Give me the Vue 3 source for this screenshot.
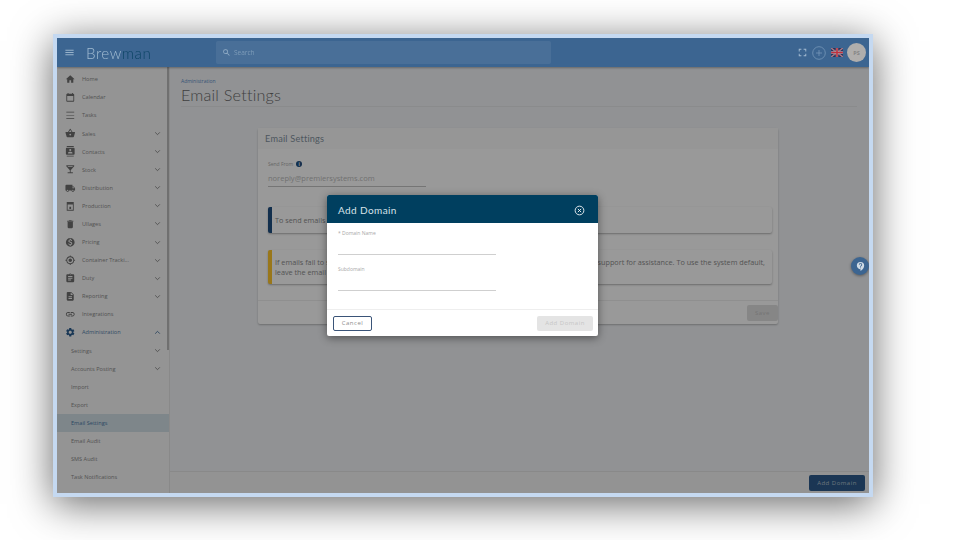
<script setup>
const P = {
  home: 'M10 20v-6h4v6h5v-8h3L12 3 2 12h3v8z',
  cal: 'M19 4h-1V2h-2v2H8V2H6v2H5a2 2 0 0 0-2 2v14a2 2 0 0 0 2 2h14a2 2 0 0 0 2-2V6a2 2 0 0 0-2-2zm0 16H5V9h14z',
  list: 'M3 4h18v1.6H3zM3 11.2h18v1.6H3zM3 18.4h18V20H3z',
  basket: 'M17.21 9l-4.38-6.56a1 1 0 0 0-1.66 0L6.79 9H2c-.55 0-1 .45-1 1l.04.27 2.54 9.27c.23.84 1 1.46 1.92 1.46h13c.92 0 1.69-.62 1.93-1.46l2.54-9.27L23 10c0-.55-.45-1-1-1h-4.79zM9 9l3-4.4L15 9H9zm3 8a2 2 0 1 1 0-4 2 2 0 0 1 0 4z',
  contacts: 'M20 0H4v2h16V0zM4 24h16v-2H4v2zM20 4H4c-1.1 0-2 .9-2 2v12c0 1.1.9 2 2 2h16c1.1 0 2-.9 2-2V6c0-1.1-.9-2-2-2zm-8 2.75c1.24 0 2.25 1.01 2.25 2.25s-1.01 2.25-2.25 2.25S9.75 10.24 9.75 9 10.76 6.75 12 6.75zM17 17H7v-1.5c0-1.67 3.33-2.5 5-2.5s5 .83 5 2.5V17z',
  bar: 'M21 5V3H3v2l8 9v5H6v2h12v-2h-5v-5l8-9zM7.43 7L5.66 5h12.69l-1.78 2H7.43z',
  truck: 'M20 8h-3V4H3c-1.1 0-2 .9-2 2v11h2c0 1.66 1.34 3 3 3s3-1.34 3-3h6c0 1.66 1.34 3 3 3s3-1.34 3-3h2v-5l-3-4zM6 18.5c-.83 0-1.5-.67-1.5-1.5s.67-1.5 1.5-1.5 1.5.67 1.5 1.5-.67 1.5-1.5 1.5zm13.5-9l1.96 2.5H17V9.5h2.5zm-1.5 9c-.83 0-1.5-.67-1.5-1.5s.67-1.5 1.5-1.5 1.5.67 1.5 1.5-.67 1.5-1.5 1.5z',
  prod: 'M4 2h16v20H4zM6 8v12h12V8zM10 13h4v5h-4z',
  ull: 'M6 19c0 1.1.9 2 2 2h8c1.1 0 2-.9 2-2V7H6v12zM19 4h-3.5l-1-1h-5l-1 1H5v2h14V4z',
  price: 'M12 2a10 10 0 1 0 0 20 10 10 0 0 0 0-20zm1.4 16.1V20h-2.7v-1.9c-1.7-.4-3.2-1.5-3.3-3.4h2c.1 1 .8 1.8 2.6 1.8 1.9 0 2.3-.9 2.3-1.5 0-.8-.4-1.5-2.6-2-2.4-.6-4.1-1.6-4.1-3.6 0-1.7 1.4-2.8 3.1-3.2V4h2.7v1.9c1.9.5 2.8 1.9 2.9 3.4h-2c-.1-1.1-.7-1.8-2.2-1.8-1.4 0-2.3.7-2.3 1.6 0 .8.6 1.3 2.6 1.8s4.1 1.4 4.1 3.8c0 1.8-1.3 2.8-3.1 3.4z',
  gps: 'M12 8c-2.21 0-4 1.79-4 4s1.79 4 4 4 4-1.79 4-4-1.79-4-4-4zm8.94 3A8.994 8.994 0 0 0 13 3.06V1h-2v2.06A8.994 8.994 0 0 0 3.06 11H1v2h2.06A8.994 8.994 0 0 0 11 20.94V23h2v-2.06A8.994 8.994 0 0 0 20.94 13H23v-2h-2.06zM12 19c-3.87 0-7-3.13-7-7s3.13-7 7-7 7 3.13 7 7-3.13 7-7 7z',
  duty: 'M19 3h-4.18C14.4 1.84 13.3 1 12 1c-1.3 0-2.4.84-2.82 2H5c-1.1 0-2 .9-2 2v14c0 1.1.9 2 2 2h14c1.1 0 2-.9 2-2V5c0-1.1-.9-2-2-2zm-7 0c.55 0 1 .45 1 1s-.45 1-1 1-1-.45-1-1 .45-1 1-1zm2 14H7v-2h7v2zm3-4H7v-2h10v2zm0-4H7V7h10v2z',
  report: 'M14 2H6c-1.1 0-1.99.9-1.99 2L4 20c0 1.1.89 2 1.99 2H18c1.1 0 2-.9 2-2V8l-6-6zm2 16H8v-2h8v2zm0-4H8v-2h8v2zm-3-5V3.5L18.5 9H13z',
  link: 'M3.9 12c0-1.71 1.39-3.1 3.1-3.1h4V7H7c-2.76 0-5 2.24-5 5s2.24 5 5 5h4v-1.9H7c-1.71 0-3.1-1.39-3.1-3.1zM8 13h8v-2H8v2zm9-6h-4v1.9h4c1.71 0 3.1 1.39 3.1 3.1s-1.39 3.1-3.1 3.1h-4V17h4c2.76 0 5-2.24 5-5s-2.24-5-5-5z',
  gear: 'M19.14 12.94c.04-.3.06-.61.06-.94 0-.32-.02-.64-.07-.94l2.03-1.58a.49.49 0 0 0 .12-.61l-1.92-3.32a.488.488 0 0 0-.59-.22l-2.39.96c-.5-.38-1.03-.7-1.62-.94l-.36-2.54a.484.484 0 0 0-.48-.41h-3.84c-.24 0-.43.17-.47.41l-.36 2.54c-.59.24-1.13.57-1.62.94l-2.39-.96c-.22-.08-.47 0-.59.22L2.74 8.87c-.12.21-.08.47.12.61l2.03 1.58c-.05.3-.09.63-.09.94s.02.64.07.94l-2.03 1.58a.49.49 0 0 0-.12.61l1.92 3.32c.12.22.37.29.59.22l2.39-.96c.5.38 1.03.7 1.62.94l.36 2.54c.05.24.24.41.48.41h3.84c.24 0 .44-.17.47-.41l.36-2.54c.59-.24 1.13-.56 1.62-.94l2.39.96c.22.08.47 0 .59-.22l1.92-3.32c.12-.22.07-.47-.12-.61l-2.01-1.58zM12 15.6c-1.98 0-3.6-1.62-3.6-3.6s1.62-3.6 3.6-3.6 3.6 1.62 3.6 3.6-1.62 3.6-3.6 3.6z',
}
const menu = [
  { label: 'Home', icon: 'home' },
  { label: 'Calendar', icon: 'cal' },
  { label: 'Tasks', icon: 'list' },
  { label: 'Sales', icon: 'basket', chev: 'down' },
  { label: 'Contacts', icon: 'contacts', chev: 'down' },
  { label: 'Stock', icon: 'bar', chev: 'down' },
  { label: 'Distribution', icon: 'truck', chev: 'down' },
  { label: 'Production', icon: 'prod', chev: 'down' },
  { label: 'Ullages', icon: 'ull', chev: 'down' },
  { label: 'Pricing', icon: 'price', chev: 'down' },
  { label: 'Container Tracki...', icon: 'gps', chev: 'down' },
  { label: 'Duty', icon: 'duty', chev: 'down' },
  { label: 'Reporting', icon: 'report', chev: 'down' },
  { label: 'Integrations', icon: 'link' },
  { label: 'Administration', icon: 'gear', chev: 'up', open: true },
  { label: 'Settings', sub: true, chev: 'down' },
  { label: 'Accounts Posting', sub: true, chev: 'down' },
  { label: 'Import', sub: true },
  { label: 'Export', sub: true },
  { label: 'Email Settings', sub: true, active: true },
  { label: 'Email Audit', sub: true },
  { label: 'SMS Audit', sub: true },
  { label: 'Task Notifications', sub: true },
  { label: 'Document Templates', sub: true },
]
</script>

<template>
  <div class="page">
    <div class="frame">
      <header class="topbar">
        <svg class="burger" viewBox="0 0 24 24"><path d="M3 18h18v-2H3zM3 13h18v-2H3zM3 6v2h18V6z" /></svg>
        <div class="logo">Brew<span>man</span></div>
        <div class="search">
          <svg viewBox="0 0 24 24"><path d="M15.5 14h-.79l-.28-.27A6.47 6.47 0 0 0 16 9.5 6.5 6.5 0 1 0 9.5 16c1.61 0 3.09-.59 4.23-1.57l.27.28v.79l5 4.99L20.49 19l-4.99-5zm-6 0C7.01 14 5 11.99 5 9.5S7.01 5 9.5 5 14 7.01 14 9.5 11.99 14 9.5 14z" /></svg>
          <span>Search</span>
        </div>
        <div class="tools">
          <svg class="full" viewBox="0 0 24 24"><path d="M2 9V2h7v2.500H4.500V9zM15 2h7v7h-2.500V4.500H15zM2 15h2.500v4.500H9V22H2zM19.500 15H22v7h-7v-2.500h4.500z" /></svg>
          <svg class="plus" viewBox="0 0 14 14"><circle cx="7" cy="7" r="6.3" /><path d="M7 4v6M4 7h6" /></svg>
          <svg class="flag" viewBox="0 0 60 46">
            <rect width="60" height="46" fill="#2b3158" />
            <path d="M0 0l60 46M60 0L0 46" stroke="#a8a8b4" stroke-width="6" />
            <path d="M0 0l60 46M60 0L0 46" stroke="#b5303c" stroke-width="3" />
            <path d="M30 0v46M0 23h60" stroke="#b0b0ba" stroke-width="12" />
            <path d="M30 0v46M0 23h60" stroke="#c0303d" stroke-width="8" />
          </svg>
          <div class="avatar">PS</div>
        </div>
      </header>

      <div class="body">
        <nav class="sidebar">
          <div
            v-for="m in menu"
            :key="m.label"
            class="row"
            :class="{ sub: m.sub, active: m.active, open: m.open }"
          >
            <svg v-if="m.icon" class="ico" viewBox="0 0 24 24"><path fill-rule="evenodd" :d="P[m.icon]" /></svg>
            <span class="lbl">{{ m.label }}</span>
            <svg v-if="m.chev" class="chev" :class="{ up: m.chev === 'up' }" viewBox="0 0 12 12"><path d="M2 4l4 4 4-4" /></svg>
          </div>
          <div class="thumb"></div>
        </nav>

        <main class="main">
          <div class="content">
            <div class="crumb">Administration</div>
            <h1 class="title">Email Settings</h1>
            <section class="card">
              <div class="card-head">Email Settings</div>
              <div class="card-body">
                <div class="send-label">Send From <i class="info">i</i></div>
                <div class="send-value">noreply@premiersystems.com</div>
                <div class="note navy">To send emails from your own domain, add the domain below and verify its records.</div>
                <div class="note amber">If emails fail to send from your own domain address after the setup is complete, please contact support for assistance. To use the system default, leave the email address blank.</div>
              </div>
              <div class="card-foot"><button class="save">Save</button></div>
            </section>
          </div>
          <div class="bottom"><button class="add">Add Domain</button></div>
        </main>
      </div>

      <div class="overlay"></div>

      <div class="help">
        <svg viewBox="0 0 24 24"><path d="M12 2a8 8 0 0 0-8 8c0 4.4 3.6 8 8 8v4c4.400-2 8-6.500 8-12a8 8 0 0 0-8-8zm1 14h-2v-2h2zm0-3.500h-2c0-2.700 2.800-2.700 2.800-4.500 0-1-.8-1.800-1.800-1.800s-1.800.8-1.800 1.800H8.300a3.700 3.700 0 0 1 7.400 0c0 2.500-2.700 2.800-2.700 4.500z" /></svg>
      </div>

      <div class="modal">
        <div class="m-head">
          <span>Add Domain</span>
          <svg viewBox="0 0 24 24"><circle cx="12" cy="12" r="9.500" /><path d="M8.500 8.500l7 7M15.500 8.500l-7 7" /></svg>
        </div>
        <div class="m-body">
          <label>* Domain Name</label>
          <div class="m-line"></div>
          <label class="second">Subdomain</label>
          <div class="m-line"></div>
        </div>
        <div class="m-foot">
          <button class="cancel">Cancel</button>
          <button class="disabled">Add Domain</button>
        </div>
      </div>
    </div>
  </div>
</template>

<style scoped>
.page {
  width: 960px;
  height: 540px;
  box-sizing: border-box;
  padding: 34px 87px 43px 53px;
  background: #fff;
  overflow: hidden;
}
.frame {
  position: relative;
  width: 820px;
  height: 463px;
  box-sizing: border-box;
  border: 4px solid #c5d9f1;
  box-shadow: 0 7px 38px rgba(0, 0, 0, 0.6);
  display: flex;
  flex-direction: column;
  overflow: hidden;
  filter: blur(0.7px);
  font-family: "Open Sans", sans-serif;
}
.topbar {
  height: 29px;
  flex: none;
  background: #3c6591;
  display: flex;
  align-items: center;
  box-shadow: 0 1px 2px rgba(0, 0, 0, 0.3);
  position: relative;
  z-index: 3;
}
.burger {
  width: 11px;
  height: 11px;
  margin-left: 7px;
  fill: #98b2ca;
}
.logo {
  margin-left: 11px;
  width: 130px;
  font: 300 15.200px "Lato", sans-serif;
  letter-spacing: 0.5px;
  color: #a2bcd2;
}
.logo span {
  color: #0c4465;
}
.search {
  width: 335px;
  height: 23px;
  background: rgba(255, 255, 255, 0.07);
  border-radius: 2px;
  display: flex;
  align-items: center;
  color: #7d9bb8;
  font-size: 6.5px;
}
.search svg {
  width: 9px;
  height: 9px;
  fill: #98b2ca;
  margin: 0 3px 0 6px;
}
.tools {
  margin-left: auto;
  display: flex;
  align-items: center;
  padding-right: 3px;
}
.full {
  width: 9px;
  height: 9px;
  fill: #a3bbd1;
}
.plus {
  width: 14px;
  height: 14px;
  margin-left: 5px;
  fill: none;
  stroke: #7f9fbe;
  stroke-width: 0.7;
}
.flag {
  width: 12px;
  height: 9px;
  margin-left: 5px;
}
.avatar {
  width: 19px;
  height: 19px;
  margin-left: 4px;
  border-radius: 50%;
  background: #b0aeac;
  color: #858585;
  font-size: 5.5px;
  font-weight: 700;
  display: flex;
  align-items: center;
  justify-content: center;
}
.body {
  flex: 1;
  min-height: 0;
  display: flex;
}
.sidebar {
  position: relative;
  width: 113px;
  flex: none;
  box-sizing: border-box;
  padding-top: 3.300px;
  background: #f7f7f7;
  border-right: 1px solid #e4e4e4;
  overflow: hidden;
}
.row {
  height: 18.080px;
  display: flex;
  align-items: center;
  padding-left: 8px;
  color: #8a8a8a;
  font-size: 5.6px;
}
.row.sub {
  padding-left: 14px;
}
.row.active {
  background: #d3e0e6;
  color: #4a7aa6;
}
.row.open {
  color: #5580aa;
}
.ico {
  width: 10.5px;
  height: 10.5px;
  flex: none;
  fill: #6e6e6e;
  margin-right: 6.5px;
}
.row.open .ico {
  fill: #2a5c8e;
}
.lbl {
  white-space: nowrap;
}
.chev {
  width: 7px;
  height: 7px;
  margin-left: auto;
  margin-right: 8px;
  fill: none;
  stroke: #707070;
  stroke-width: 1.300;
}
.chev.up {
  transform: rotate(180deg);
  stroke: #2a5c8e;
}
.thumb {
  position: absolute;
  right: 0;
  top: 0;
  width: 2px;
  height: 283px;
  background: #bbb;
}
.main {
  flex: 1;
  min-width: 0;
  display: flex;
  flex-direction: column;
  background: #f2f4f7;
}
.content {
  flex: 1;
  padding: 11px 12px 0 11px;
}
.crumb {
  font-size: 5px;
  line-height: 6px;
  color: #5a8cc8;
}
.title {
  margin: 0;
  padding-top: 1px;
  height: 21px;
  border-bottom: 1px solid #e6e8ea;
  font: 300 16.200px/20px "Lato", sans-serif;
  letter-spacing: 0.2px;
  color: #6a6a6a;
}
.card {
  width: 520px;
  margin: 21px 0 0 77px;
  background: #fff;
  box-shadow: 0 1px 2px rgba(0, 0, 0, 0.25);
  border-radius: 2px;
}
.card-head {
  height: 21px;
  line-height: 21px;
  padding-left: 7px;
  background: #fafafa;
  font: 400 9.200px/21px "Lato", sans-serif;
  letter-spacing: 0.2px;
  color: #84929f;
}
.card-body {
  height: 152px;
  padding: 11px 6px 0 10px;
  box-sizing: border-box;
  border-bottom: 1px solid #eee;
}
.send-label {
  font-size: 5px;
  line-height: 8px;
  color: #aaa;
  display: flex;
  align-items: center;
  gap: 3px;
}
.info {
  width: 6px;
  height: 6px;
  border-radius: 50%;
  background: #1f4f80;
  color: #fff;
  font: 700 4.500px/6px "Open Sans", sans-serif;
  text-align: center;
}
.send-value {
  width: 158px;
  height: 16px;
  margin-top: 3px;
  line-height: 14px;
  box-sizing: border-box;
  border-bottom: 1px solid #c4c4c4;
  font-size: 7.500px;
  color: #bdbdbd;
}
.note {
  box-sizing: border-box;
  border-left: 4px solid;
  border-radius: 2px;
  background: #fff;
  box-shadow: 0 1px 2px rgba(0, 0, 0, 0.3);
  padding-left: 3px;
  padding-right: 6px;
  display: flex;
  align-items: center;
  font-size: 7.250px;
  line-height: 10.500px;
  color: #8c8c8c;
}
.note.navy {
  height: 26px;
  margin-top: 20px;
  border-color: #1f4f80;
}
.note.amber {
  height: 34px;
  margin-top: 17px;
  border-color: #ffc72c;
}
.card-foot {
  height: 23px;
  display: flex;
  justify-content: flex-end;
  align-items: center;
}
button {
  border: 0;
  border-radius: 2px;
  font-family: "Open Sans", sans-serif;
  font-size: 6px;
  letter-spacing: 0.5px;
  padding: 0;
}
.save {
  width: 31px;
  height: 16px;
  background: #e0e0e0;
  color: #c2c2c2;
}
.bottom {
  height: 22px;
  flex: none;
  box-sizing: border-box;
  border-top: 1px solid #e4e4e4;
  background: #f5f5f5;
  display: flex;
  justify-content: flex-end;
  align-items: center;
  padding-right: 4px;
}
.add {
  width: 56px;
  height: 16px;
  background: #2e5b8c;
  color: #b4c2d0;
}
.overlay {
  position: absolute;
  inset: 0;
  z-index: 2;
  background: rgba(0, 0, 0, 0.4);
}
.help {
  position: absolute;
  z-index: 3;
  left: 794px;
  top: 219px;
  width: 18px;
  height: 18px;
  border-radius: 50%;
  background: #3c6591;
  box-shadow: 0 1px 3px rgba(0, 0, 0, 0.4);
  display: flex;
  align-items: center;
  justify-content: center;
}
.help svg {
  width: 11px;
  height: 11px;
  fill: #cfdbe6;
}
.modal {
  position: absolute;
  z-index: 4;
  left: 270px;
  top: 157px;
  width: 271px;
  height: 141px;
  background: #fff;
  border-radius: 2px;
  box-shadow: 0 2px 8px rgba(0, 0, 0, 0.45);
  display: flex;
  flex-direction: column;
  overflow: hidden;
}
.m-head {
  height: 28px;
  flex: none;
  background: #003f5f;
  color: #d8e2e9;
  display: flex;
  align-items: center;
  justify-content: space-between;
  padding: 2px 13px 0 11px;
  box-sizing: border-box;
  font: 400 10px "Lato", sans-serif;
  letter-spacing: 0.4px;
}
.m-head svg {
  width: 11px;
  height: 11px;
  fill: none;
  stroke: #f2f5f7;
  stroke-width: 2;
}
.m-body {
  flex: 1;
  padding: 6px 0 0 11px;
}
.m-body label {
  display: block;
  font-size: 5px;
  line-height: 8px;
  color: #a8a8a8;
}
.m-body .second {
  margin-top: 10px;
}
.m-line {
  width: 158px;
  height: 1px;
  margin-top: 17px;
  background: #cfcfcf;
}
.m-foot {
  height: 27px;
  flex: none;
  box-sizing: border-box;
  border-top: 1px solid #eee;
  display: flex;
  align-items: center;
  justify-content: space-between;
  padding: 0 5px 0 6px;
}
.cancel {
  width: 39px;
  height: 15px;
  background: #fff;
  border: 1px solid #3a5478;
  color: #8c8c8c;
}
.disabled {
  width: 56px;
  height: 15px;
  background: #e4e4e4;
  color: #c6c6c6;
}
</style>

<style>
html, body { margin: 0; background: #fff; }
</style>
